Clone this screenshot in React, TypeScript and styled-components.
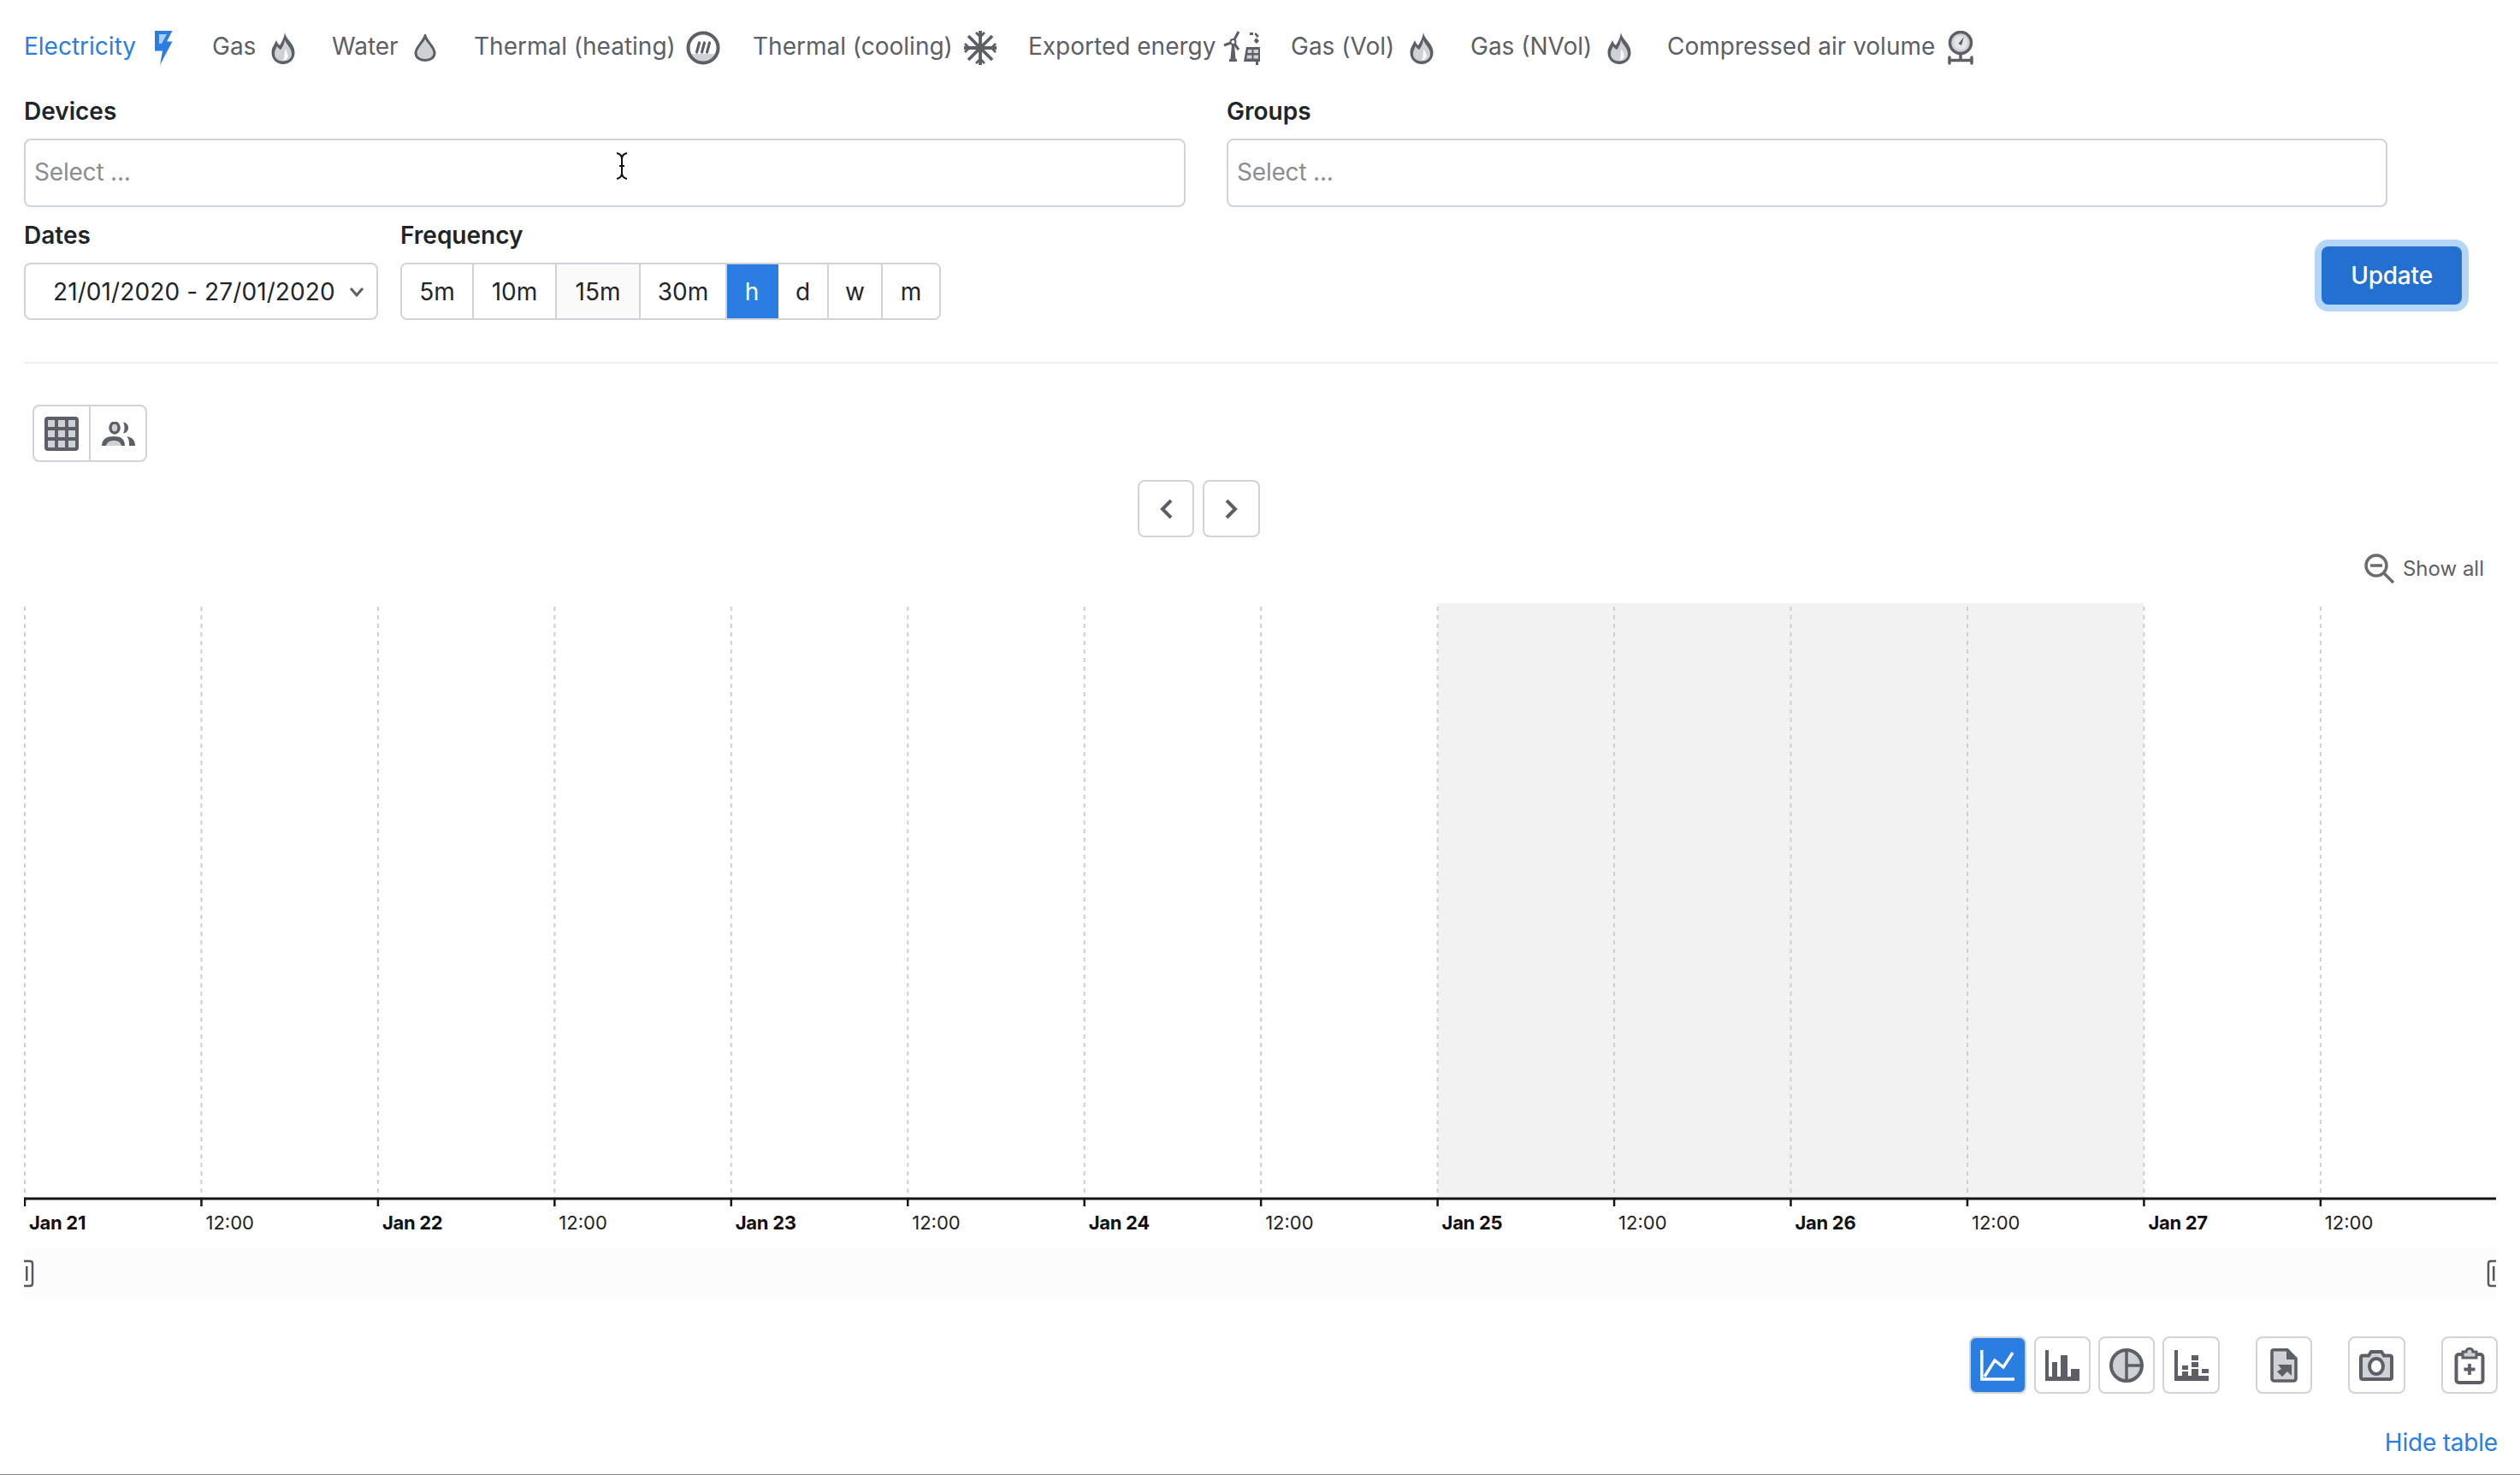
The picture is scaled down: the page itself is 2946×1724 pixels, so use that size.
import React from 'react';
import styled, { createGlobalStyle } from 'styled-components';

const DARK = '#5c6066';
const LIGHT = '#ced2d6';
const BLUE = '#2a7de1';

const GlobalStyle = createGlobalStyle`
  html, body { margin: 0; padding: 0; background: #fff; }
  body { font-family: Inter, "Liberation Sans", sans-serif; color: #212529; }
  * { box-sizing: border-box; }
`;

/* tab icons */
const Bolt = () => (
  <svg width="21" height="40" viewBox="0 0 21 40">
    <path d="M0 0H20.500L14 12.500H20.500L6 40L9 23.500H0Z" fill={BLUE} />
    <path d="M5 4H14L8 15H5Z" fill="#a9cdf5" />
  </svg>
);
const Flame = () => (
  <svg width="28" height="37" viewBox="0 0 28 37">
    <path d="M16 0C17 8 27.500 13 27.500 23.500C27.500 31.500 21.500 37 14 37C6.500 37 .5 31.500 .5 23.500C.5 17.500 4 14 6 9C7 12 8.500 14 10 15C13 10 15 6 16 0Z" fill={DARK} />
    <path d="M16 8.500C17.500 14 24 18 24 25C24 30.500 19.500 33.500 14 33.500C8.500 33.500 4 30.500 4 25C4 21.500 5.500 19 6.800 16C8 18 9.500 19.500 11.500 20C13.500 16.500 15.500 13 16 8.500Z" fill={LIGHT} />
    <path d="M16.500 19C18 23 20 25 19.500 28.500C19 30.500 17 32 14.500 32.500C16 28 15.500 24 16.500 19Z" fill="#fff" />
  </svg>
);
const Drop = () => (
  <svg width="26" height="32" viewBox="0 0 26 32">
    <path d="M13 2C15 9 24 15 24 22C24 27.500 19 30.500 13 30.500C7 30.500 2 27.500 2 22C2 15 11 9 13 2Z" fill={LIGHT} stroke={DARK} strokeWidth="3" />
  </svg>
);
const Heating = () => (
  <svg width="40" height="40" viewBox="0 0 40 40">
    <path d="M5 27H35L30 34L20 37L10 34Z" fill={LIGHT} />
    <circle cx="20" cy="20" r="17.500" fill="none" stroke={DARK} strokeWidth="4" />
    <path d="M12.500 25L15.500 14M18.500 25L21.500 14M24.500 25L27.500 14" stroke={DARK} strokeWidth="3.200" strokeLinecap="round" />
  </svg>
);
const Snow = () => (
  <svg width="40" height="40" viewBox="0 0 40 40" fill="none" stroke={DARK} strokeWidth="3.800">
    <path d="M20 0V40M1 20H39M6 6L34 34M34 6L6 34" />
    <path d="M15 2L20 7L25 2M15 38L20 33L25 38M2 15L7 20L2 25M38 15L33 20L38 25" strokeWidth="2.800" />
  </svg>
);
const Exported = () => (
  <svg width="44" height="40" viewBox="0 0 44 40">
    <path d="M10 16L13 16L14.500 33H8.500Z" fill={DARK} />
    <path d="M7 33H16V36H7Z" fill={DARK} />
    <path d="M11.500 13L1 17M11.500 13L18 1M11.500 13L18 22" stroke={DARK} strokeWidth="3" fill="none" />
    <circle cx="11.500" cy="13" r="3" fill="#fff" stroke={DARK} strokeWidth="2" />
    <path d="M27 19H43V36H24Z" fill={DARK} />
    <path d="M29 22H33.500V26H28.500ZM35.500 22H41V26H35.500ZM28 28.500H33.500V32.500H27.500ZM35.500 28.500H41V32.500H35.500Z" fill={LIGHT} />
    <rect x="38" y="36" width="3" height="4" fill={DARK} />
    <path d="M31 2H35V5H31ZM38 2L42 6L39.500 8L36.500 4ZM37 10L39 8.500L42 12L39 15L36 12Z" fill={DARK} />
  </svg>
);
const Gauge = () => (
  <svg width="32" height="40" viewBox="0 0 32 40">
    <circle cx="16" cy="14" r="12.500" fill={LIGHT} stroke={DARK} strokeWidth="3.500" />
    <circle cx="16" cy="14" r="8" fill="#e3e5e7" />
    <path d="M20 7L17 17L13.500 15Z" fill={DARK} />
    <path d="M16 26V34M3 34.500H29" stroke={DARK} strokeWidth="3.500" />
    <path d="M3 31V38M29 31V38" stroke={DARK} strokeWidth="3.500" strokeLinecap="round" />
  </svg>
);

const tabs: { label: string; icon: React.ReactNode; width: number; gap: number; active?: boolean }[] = [
  { label: 'Electricity', icon: <Bolt />, width: 220, gap: 22, active: true },
  { label: 'Gas', icon: <Flame />, width: 140, gap: 18 },
  { label: 'Water', icon: <Drop />, width: 166, gap: 18 },
  { label: 'Thermal (heating)', icon: <Heating />, width: 326, gap: 12 },
  { label: 'Thermal (cooling)', icon: <Snow />, width: 322, gap: 12 },
  { label: 'Exported energy', icon: <Exported />, width: 307, gap: 9 },
  { label: 'Gas (Vol)', icon: <Flame />, width: 210, gap: 18 },
  { label: 'Gas (NVol)', icon: <Flame />, width: 230, gap: 18 },
  { label: 'Compressed air volume', icon: <Gauge />, width: 360, gap: 14 },
];

const frequencies: { label: string; width: number; active?: boolean; hover?: boolean }[] = [
  { label: '5m', width: 84 },
  { label: '10m', width: 97 },
  { label: '15m', width: 98, hover: true },
  { label: '30m', width: 101 },
  { label: 'h', width: 60, active: true },
  { label: 'd', width: 59 },
  { label: 'w', width: 63 },
  { label: 'm', width: 66 },
];

/* chart: the plot is a free drawing, one tick every 12h */
const TICK_START = 1;
const TICK_STEP = 206.45;
const ticks = Array.from({ length: 14 }, (_, i) => TICK_START + i * TICK_STEP);
const days = ['Jan 21', 'Jan 22', 'Jan 23', 'Jan 24', 'Jan 25', 'Jan 26', 'Jan 27'];

const Chart = () => (
  <ChartSvg viewBox="0 0 2892 811">
    <rect x={ticks[8]} y="0" width={ticks[12] - ticks[8]} height="696" fill="#f2f2f2" />
    {ticks.map(x => (
      <line key={x} x1={x} x2={x} y1="4" y2="696" stroke="#cfcfcf" strokeWidth="2" strokeDasharray="5 5" />
    ))}
    <line x1="0" x2="2890" y1="696" y2="696" stroke="#141414" strokeWidth="3" />
    {ticks.map(x => (
      <line key={x} x1={x} x2={x} y1="696" y2="705" stroke="#141414" strokeWidth="2.500" />
    ))}
    {ticks.map((x, i) =>
      i % 2 === 0 ? (
        <AxisDay key={x} x={x + 5} y="732">{days[i / 2]}</AxisDay>
      ) : (
        <AxisHour key={x} x={x + 5} y="732">12:00</AxisHour>
      )
    )}
    <rect x="0" y="754" width="2890" height="57" fill="#fcfcfc" />
    <path d="M0 769H7Q10 769 10 772V795Q10 798 7 798H0" fill="#fff" stroke="#55585c" strokeWidth="2.500" />
    <rect x="2" y="775" width="2.500" height="17" fill="#55585c" />
    <path d="M2890 769H2884Q2881 769 2881 772V795Q2881 798 2884 798H2890" fill="#fff" stroke="#55585c" strokeWidth="2.500" />
    <rect x="2886" y="775" width="2.500" height="17" fill="#55585c" />
  </ChartSvg>
);

const App = () => (
  <Page>
    <GlobalStyle />
    <Tabs>
      {tabs.map(t => (
        <Tab key={t.label} $width={t.width} $gap={t.gap} $active={t.active}>
          {t.label}
          {t.icon}
        </Tab>
      ))}
    </Tabs>

    <SelectGrid>
      <Field>
        <Label>Devices</Label>
        <MultiSelect>Select ...</MultiSelect>
      </Field>
      <Field>
        <Label>Groups</Label>
        <MultiSelect>Select ...</MultiSelect>
      </Field>
    </SelectGrid>
    <Cursor width="16" height="32" viewBox="0 0 16 32" fill="none" stroke="#111" strokeWidth="2">
      <path d="M2 1Q8 2 8 8V24Q8 30 2 31M14 1Q8 2 8 8V24Q8 30 14 31M5 16H11" />
    </Cursor>

    <ControlRow>
      <Field>
        <Label>Dates</Label>
        <DateSelect>
          21/01/2020 - 27/01/2020
          <svg width="18" height="12" viewBox="0 0 18 12" fill="none" stroke={DARK} strokeWidth="3">
            <path d="M2 2L9 10L16 2" />
          </svg>
        </DateSelect>
      </Field>
      <Field>
        <Label>Frequency</Label>
        <ButtonGroup>
          {frequencies.map(f => (
            <FreqButton key={f.label} $width={f.width} $active={f.active} $hover={f.hover}>
              {f.label}
            </FreqButton>
          ))}
        </ButtonGroup>
      </Field>
      <UpdateButton>Update</UpdateButton>
    </ControlRow>

    <Divider />

    <ViewGroup>
      <ViewButton>
        <svg width="40" height="40" viewBox="0 0 40 40">
          <rect width="40" height="40" rx="4" fill={DARK} />
          <path d="M4 4H12V12H4ZM16 4H24V12H16ZM28 4H36V12H28ZM4 16H12V24H4ZM16 16H24V24H16ZM28 16H36V24H28ZM4 28H12V36H4ZM16 28H24V36H16ZM28 28H36V36H28Z" fill={LIGHT} />
        </svg>
      </ViewButton>
      <ViewButton>
        <svg width="40" height="28" viewBox="0 0 40 28">
          <ellipse cx="16" cy="7" rx="5" ry="6" fill={LIGHT} stroke={DARK} strokeWidth="3.500" />
          <path d="M26 .5C30 1 32 4 32 7C32 10 30 13 26 13.500C28 10 28 4 26 .5Z" fill={DARK} />
          <path d="M1 28C1 20 7 17 15 17C23 17 28 20 28 28Z" fill={DARK} />
          <path d="M6 28C7 24 10 22 15 22C20 22 23 24 24 28Z" fill={LIGHT} />
          <path d="M30 17C36 18 40 21 40 28H33C33 23 33 20 30 17Z" fill={DARK} />
        </svg>
      </ViewButton>
    </ViewGroup>

    <NavRow>
      <IconButton>
        <svg width="16" height="24" viewBox="0 0 16 24" fill="none" stroke={DARK} strokeWidth="4">
          <path d="M14 2L4 12L14 22" />
        </svg>
      </IconButton>
      <IconButton>
        <svg width="16" height="24" viewBox="0 0 16 24" fill="none" stroke={DARK} strokeWidth="4">
          <path d="M2 2L12 12L2 22" />
        </svg>
      </IconButton>
    </NavRow>

    <ShowAll>
      <svg width="36" height="36" viewBox="0 0 36 36" fill="none" stroke="#6a6c70" strokeWidth="3.500">
        <circle cx="14" cy="14" r="12" />
        <path d="M7 14H21M23 23L34 34" />
      </svg>
      Show all
    </ShowAll>

    <Chart />

    <ChartTools>
      <ToolGroup>
        <IconButton $active>
          <svg width="40" height="36" viewBox="0 0 40 36" fill="none" stroke="#fff" strokeWidth="3.500">
            <path d="M1.800 0V34H40" />
            <path d="M5 31L17 12L27 20L38 3" />
          </svg>
        </IconButton>
        <IconButton>
          <svg width="40" height="36" viewBox="0 0 40 36" fill={DARK}>
            <path d="M0 0H4V31H8V14H14V31H18V6H26V31H30V22H40V36H0Z" />
          </svg>
        </IconButton>
        <IconButton>
          <svg width="40" height="40" viewBox="0 0 40 40">
            <ellipse cx="20" cy="20" rx="18" ry="18" fill={LIGHT} stroke={DARK} strokeWidth="4" />
            <path d="M20 2V38M20 20H38" stroke={DARK} strokeWidth="3.500" />
          </svg>
        </IconButton>
        <IconButton>
          <svg width="40" height="36" viewBox="0 0 40 36" fill={DARK}>
            <path d="M0 0H4V36H0ZM0 30H40V36H0ZM9 18H16V23H9ZM9 25H16V30H9ZM20 6H28V12H20ZM20 14H28V20H20ZM20 22H28V30H20ZM32 22H40V27H32Z" />
          </svg>
        </IconButton>
      </ToolGroup>
      <IconButton>
        <svg width="32" height="40" viewBox="0 0 32 40">
          <path d="M4 1.800H20L30 12V35Q30 38 27 38H5Q2 38 2 35V4Q2 1.800 4 1.800Z" fill={LIGHT} stroke={DARK} strokeWidth="3.600" />
          <path d="M19 2L30 13H19Z" fill={DARK} />
          <path d="M9 19H25V32L20 27L14 33L8 27L13 24Z" fill={DARK} />
        </svg>
      </IconButton>
      <IconButton>
        <svg width="40" height="36" viewBox="0 0 40 36">
          <path d="M4 6.500H11L14 2H26L29 6.500H36Q38 6.500 38 9V32Q38 34 36 34H4Q2 34 2 32V9Q2 6.500 4 6.500Z" fill={LIGHT} stroke={DARK} strokeWidth="4" />
          <ellipse cx="20" cy="19" rx="8" ry="9" fill="#fff" stroke={DARK} strokeWidth="4" />
        </svg>
      </IconButton>
      <IconButton>
        <svg width="36" height="44" viewBox="0 0 36 44">
          <rect x="2.500" y="9" width="31" height="33" rx="3" fill="#fff" stroke={DARK} strokeWidth="4" />
          <path d="M10 6H14C14 1 22 1 22 6H26V13H10Z" fill={LIGHT} stroke={DARK} strokeWidth="3" />
          <path d="M18 20V33M11.500 26.500H24.500" stroke={DARK} strokeWidth="3.800" />
        </svg>
      </IconButton>
    </ChartTools>

    <HideRow>
      <HideLink>Hide table</HideLink>
    </HideRow>
  </Page>
);

const Page = styled.div`
  position: relative;
  height: 1724px;
  padding: 0 26px 0 28px;
  border-bottom: 1px solid #8a8a8a;
  overflow: hidden;
`;
const Tabs = styled.div`
  display: flex;
  padding-top: 34px;
  height: 74px;
`;
const Tab = styled.div<{ $width: number; $gap: number; $active?: boolean }>`
  flex: 0 0 ${p => p.$width}px;
  display: flex;
  align-items: center;
  gap: ${p => p.$gap}px;
  height: 40px;
  font-size: 28px;
  white-space: nowrap;
  color: ${p => (p.$active ? BLUE : '#5c6066')};
  & > svg {
    margin-top: 4px;
  }
`;
const SelectGrid = styled.div`
  display: grid;
  grid-template-columns: 1358px 1357px;
  column-gap: 48px;
  margin-top: 38px;
`;
const Field = styled.div`
  display: flex;
  flex-direction: column;
`;
const Label = styled.div`
  height: 36px;
  line-height: 36px;
  font-size: 28px;
  font-weight: 600;
  color: #212529;
  margin-bottom: 14px;
`;
const MultiSelect = styled.div`
  height: 80px;
  padding: 0 10px 2px;
  display: flex;
  align-items: center;
  border: 2px solid #ced4da;
  border-radius: 8px;
  font-size: 28px;
  letter-spacing: -0.2px;
  color: #8a8d91;
`;
const Cursor = styled.svg`
  position: absolute;
  left: 719px;
  top: 178px;
`;
const ControlRow = styled.div`
  display: flex;
  gap: 26px;
  margin-top: 15px;
`;
const DateSelect = styled.div`
  width: 414px;
  height: 67px;
  padding: 0 14px 0 32px;
  display: flex;
  align-items: center;
  justify-content: space-between;
  border: 2px solid #ced4da;
  border-radius: 8px;
  font-size: 28px;
  letter-spacing: 0.1px;
  color: #212529;
`;
const ButtonGroup = styled.div`
  display: flex;
  height: 67px;
  border: 2px solid #ced4da;
  border-radius: 8px;
  overflow: hidden;
`;
const FreqButton = styled.div<{ $width: number; $active?: boolean; $hover?: boolean }>`
  width: ${p => p.$width}px;
  display: flex;
  align-items: center;
  justify-content: center;
  font-size: 28px;
  color: ${p => (p.$active ? '#fff' : '#212529')};
  background: ${p => (p.$active ? BLUE : p.$hover ? '#fbfbfb' : '#fff')};
  border-right: 2px solid ${p => (p.$active ? BLUE : '#ced4da')};
  &:last-child {
    border-right: 0;
  }
`;
const UpdateButton = styled.div`
  margin: 31px 42px 0 auto;
  width: 164px;
  height: 68px;
  display: flex;
  align-items: center;
  justify-content: center;
  border-radius: 8px;
  background: #2470d0;
  box-shadow: 0 0 0 8px #b5d6f6;
  color: #fff;
  font-size: 28px;
  font-weight: 500;
  letter-spacing: -0.2px;
`;
const Divider = styled.div`
  height: 2px;
  margin-top: 49px;
  background: #eeeeee;
`;
const ViewGroup = styled.div`
  display: flex;
  width: 134px;
  height: 67px;
  margin: 48px 0 0 10px;
  border: 2px solid #ced4da;
  border-radius: 8px;
`;
const ViewButton = styled.div`
  flex: 1;
  display: flex;
  align-items: center;
  justify-content: center;
  &:first-child {
    border-right: 2px solid #ced4da;
  }
`;
const NavRow = styled.div`
  display: flex;
  gap: 10px;
  margin: 21px 0 0 1302px;
`;
const IconButton = styled.div<{ $active?: boolean }>`
  width: 66.4px;
  height: 67px;
  display: flex;
  align-items: center;
  justify-content: center;
  border: 2px solid #ced4da;
  border-radius: 8px;
  background: ${p => (p.$active ? BLUE : '#fff')};
`;
const ShowAll = styled.div`
  display: flex;
  justify-content: flex-end;
  align-items: center;
  gap: 9px;
  height: 36px;
  margin-top: 19px;
  padding: 0 16px 2px 0;
  font-size: 24px;
  color: #5c6066;
  & > svg {
    margin-top: 2px;
  }
`;
const ChartSvg = styled.svg`
  display: block;
  width: 2892px;
  height: 811px;
  margin-top: 22px;
`;
const AxisDay = styled.text`
  font-family: Inter, "Liberation Sans", sans-serif;
  font-size: 22px;
  font-weight: 700;
  letter-spacing: -0.3px;
  fill: #111;
`;
const AxisHour = styled.text`
  font-family: Inter, "Liberation Sans", sans-serif;
  font-size: 22px;
  fill: #222;
`;
const ChartTools = styled.div`
  display: flex;
  justify-content: flex-end;
  gap: 42px;
  margin-top: 46px;
`;
const ToolGroup = styled.div`
  display: flex;
  gap: 9px;
`;
const HideRow = styled.div`
  display: flex;
  justify-content: flex-end;
  margin-top: 37px;
`;
const HideLink = styled.div`
  height: 40px;
  line-height: 40px;
  font-size: 28px;
  letter-spacing: -0.2px;
  color: ${BLUE};
`;

export default App;
